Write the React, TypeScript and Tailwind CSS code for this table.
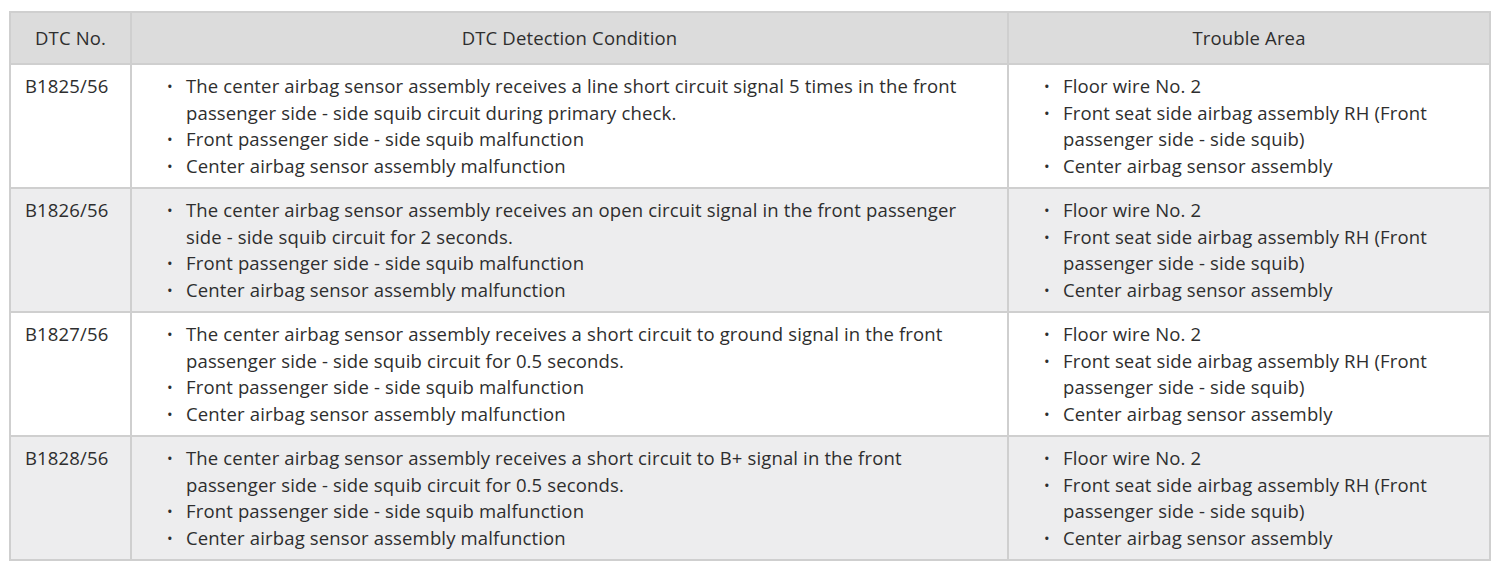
import React from 'react'

type Row = {
  code: string
  condition: string[]
  area: string[]
}

const common = [
  'Front passenger side - side squib malfunction',
  'Center airbag sensor assembly malfunction',
]

const areas = [
  'Floor wire No. 2',
  'Front seat side airbag assembly RH (Front passenger side - side squib)',
  'Center airbag sensor assembly',
]

const rows: Row[] = [
  {
    code: 'B1825/56',
    condition: [
      'The center airbag sensor assembly receives a line short circuit signal 5 times in the front passenger side - side squib circuit during primary check.',
      ...common,
    ],
    area: areas,
  },
  {
    code: 'B1826/56',
    condition: [
      'The center airbag sensor assembly receives an open circuit signal in the front passenger side - side squib circuit for 2 seconds.',
      ...common,
    ],
    area: areas,
  },
  {
    code: 'B1827/56',
    condition: [
      'The center airbag sensor assembly receives a short circuit to ground signal in the front passenger side - side squib circuit for 0.5 seconds.',
      ...common,
    ],
    area: areas,
  },
  {
    code: 'B1828/56',
    condition: [
      'The center airbag sensor assembly receives a short circuit to B+ signal in the front passenger side - side squib circuit for 0.5 seconds.',
      ...common,
    ],
    area: areas,
  },
]

function Bullets({ items, pad }: { items: string[]; pad: string }) {
  return (
    <ul className={`pt-[8px] ${pad} pr-[24px]`}>
      {items.map((t, i) => (
        <li key={i} className="flex">
          <span className="w-[19px] shrink-0 text-[15px]">•</span>
          <span>{t}</span>
        </li>
      ))}
    </ul>
  )
}

export default function App() {
  return (
    <div
      className="bg-white min-h-screen pt-[11px] pl-[9px] text-[#2e2e2e] text-[18.5px] leading-[26.5px] tracking-[0.15px]"
      style={{ fontFamily: '"Open Sans", "Noto Sans", sans-serif' }}
    >
      <div className="grid grid-cols-[119px_875px_480px] grid-rows-[50px_122px_122px_122px_122px] gap-[2px] p-[2px] bg-[#cfcfcf] w-fit">
        {/* header */}
        <div className="bg-[#dcdcdc] flex items-center justify-center">DTC No.</div>
        <div className="bg-[#dcdcdc] flex items-center justify-center">DTC Detection Condition</div>
        <div className="bg-[#dcdcdc] flex items-center justify-center">Trouble Area</div>

        {rows.map((r, i) => {
          const bg = i % 2 === 0 ? 'bg-white' : 'bg-[#ededee]'
          return (
            <React.Fragment key={r.code}>
              <div className={`${bg} pt-[8px] pl-[14px]`}>{r.code}</div>
              <div className={bg}>
                <Bullets items={r.condition} pad="pl-[35px]" />
              </div>
              <div className={bg}>
                <Bullets items={r.area} pad="pl-[35px]" />
              </div>
            </React.Fragment>
          )
        })}
      </div>
    </div>
  )
}
